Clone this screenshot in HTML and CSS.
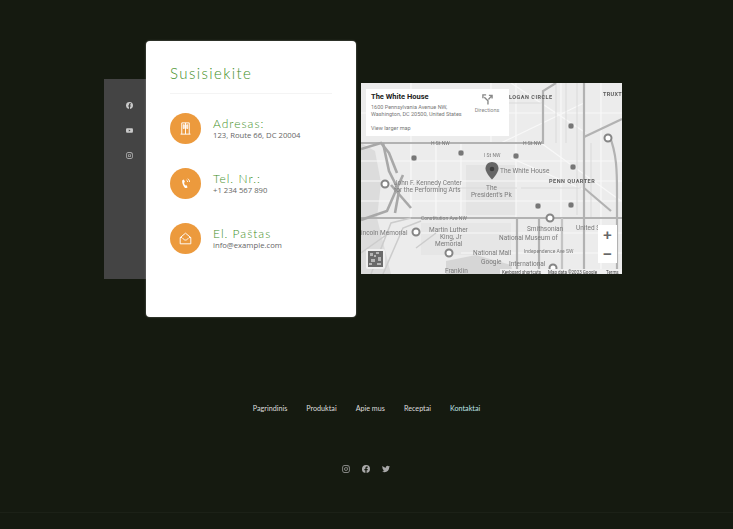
FILE: index.html
```html
<!DOCTYPE html>
<html lang="lt">
<head>
    <meta charset="UTF-8">
    <meta name="viewport" content="width=device-width, initial-scale=1.0">
    <title>Susisiekite</title>
    <link rel="stylesheet" href="styles.css">
</head>
<body>
    <svg class="icon-defs" width="0" height="0" aria-hidden="true">
        <symbol id="i-facebook" viewBox="0 0 24 24"><path d="M24 12a12 12 0 1 0-13.9 11.9v-8.400H7.100V12h3V9.400c0-3 1.800-4.700 4.500-4.700 1.300 0 2.700.2 2.700.2v3h-1.500c-1.500 0-2 .9-2 1.900V12h3.400l-.5 3.500h-2.900v8.400A12 12 0 0 0 24 12z"/></symbol>
        <symbol id="i-youtube" viewBox="0 0 24 24"><path d="M23.500 6.500a3 3 0 0 0-2.100-2.100C19.500 3.900 12 3.900 12 3.900s-7.500 0-9.400.5A3 3 0 0 0 .5 6.500 31 31 0 0 0 0 12a31 31 0 0 0 .5 5.500 3 3 0 0 0 2.100 2.100c1.900.5 9.400.5 9.400.5s7.500 0 9.400-.5a3 3 0 0 0 2.100-2.100A31 31 0 0 0 24 12a31 31 0 0 0-.5-5.500zM9.600 15.600V8.400l6.200 3.600z"/></symbol>
        <symbol id="i-instagram" viewBox="0 0 24 24"><path d="M7 1h10a6 6 0 0 1 6 6v10a6 6 0 0 1-6 6H7a6 6 0 0 1-6-6V7a6 6 0 0 1 6-6zm0 2.200A3.800 3.800 0 0 0 3.200 7v10A3.800 3.800 0 0 0 7 20.800h10a3.800 3.800 0 0 0 3.800-3.800V7A3.800 3.800 0 0 0 17 3.200zM12 6.500a5.500 5.500 0 1 1 0 11 5.500 5.500 0 0 1 0-11zm0 2.200a3.300 3.300 0 1 0 0 6.600 3.300 3.300 0 0 0 0-6.600zM17.800 4.800a1.400 1.400 0 1 1 0 2.800 1.400 1.400 0 0 1 0-2.800z" fill-rule="evenodd"/></symbol>
        <symbol id="i-twitter" viewBox="0 0 24 24"><path d="M24 4.600a10 10 0 0 1-2.800.8 5 5 0 0 0 2.200-2.700 10 10 0 0 1-3.100 1.200 4.900 4.900 0 0 0-8.400 4.500A14 14 0 0 1 1.700 3.200a4.900 4.900 0 0 0 1.500 6.600 4.900 4.900 0 0 1-2.200-.6 4.900 4.900 0 0 0 3.900 4.900 4.900 4.900 0 0 1-2.200.1 4.900 4.900 0 0 0 4.600 3.400A9.900 9.900 0 0 1 0 19.600a14 14 0 0 0 7.500 2.200c9.100 0 14.300-7.700 14-14.600A10 10 0 0 0 24 4.600z"/></symbol>
    </svg>

    <section class="contact">
        <aside class="side-social">
            <a href="#"><svg class="side-icon"><use href="#i-facebook"/></svg></a>
            <a href="#"><svg class="side-icon"><use href="#i-youtube"/></svg></a>
            <a href="#"><svg class="side-icon"><use href="#i-instagram"/></svg></a>
        </aside>

        <div class="card">
            <h1>Susisiekite</h1>

            <div class="info-row">
                <span class="info-circle">
                    <svg viewBox="0 0 24 24" class="line-icon">
                        <path d="M6 21V3h12v18M12 3v18M8.500 6h1.500v6H8.500zM14 6h1.500v6H14zM4 21h16"/>
                    </svg>
                </span>
                <div class="info-text">
                    <h3>Adresas:</h3>
                    <p>123, Route 66, DC 20004</p>
                </div>
            </div>

            <div class="info-row">
                <span class="info-circle">
                    <svg viewBox="0 0 24 24" class="fill-icon">
                        <path d="M7.500 6.500l2-.8 1.600 3.700-1.500 1.200c.3 1.800 1 3.300 2 4.500l1.700-.6 2.100 3.300-1.800 1.300c-1.100.6-2.300.2-3.100-.8-2.300-2.700-3.700-6.300-3.900-9.800 0-.9.200-1.700.9-2z"/>
                        <path d="M13.500 6.500c1.300.6 2 1.700 2 3M15.500 4.500c2 1 3 2.800 3 5" fill="none" stroke="currentColor" stroke-width="1.500"/>
                    </svg>
                </span>
                <div class="info-text">
                    <h3>Tel. Nr.:</h3>
                    <p>+1 234 567 890</p>
                </div>
            </div>

            <div class="info-row">
                <span class="info-circle">
                    <svg viewBox="0 0 24 24" class="line-icon">
                        <path d="M3.500 10.500L12 3.500l8.500 7V20.500h-17zM3.500 10.500h3M20.500 10.500h-3M7.500 11.500c1.200 2 2.800 3 4.500 3s3.300-1 4.500-3"/>
                    </svg>
                </span>
                <div class="info-text">
                    <h3>El. Paštas</h3>
                    <p>info@example.com</p>
                </div>
            </div>
        </div>

        <div class="map">
            <svg viewBox="0 0 261 191" width="261" height="191" class="map-art">
                <rect width="261" height="191" fill="#ececec"/>
                <!-- vanduo ir parkai -->
                <path d="M0 60L14 68 20 100 16 135 30 191H0z" fill="#dcdcdc"/>
                <path d="M85 178L115 172 150 182 152 191H85z" fill="#d6d6d6"/>
                <rect x="105" y="82" width="50" height="50" fill="#e4e4e4"/>
                <rect x="60" y="140" width="90" height="32" fill="#e6e6e6"/>
                <!-- smulkios gatves -->
                <g stroke="#f8f8f8" stroke-width="1.200" fill="none">
                    <path d="M0 30H261M0 78H261M0 98H261M0 118H261M60 150H261M100 170H261"/>
                    <path d="M50 0V135M75 60V135M100 60V135M130 0V60M155 0V135M200 0V135M240 0V191"/>
                    <path d="M150 0L225 50M140 60L223 20M180 60L260 118M150 75L230 110"/>
                </g>
                <g stroke="#dadada" stroke-width="1" fill="none">
                    <path d="M148 20H182M195 0V60M205 0V60M216 0V132M60 45H148M60 105H156M160 105H220M230 60V135"/>
                </g>
                <!-- pagrindiniai keliai -->
                <g stroke="#b2b2b2" stroke-width="2.200" fill="none">
                    <path d="M0 60H182V8L195 0"/>
                    <path d="M223 0V191"/>
                    <path d="M223 54L261 36"/>
                    <path d="M248 52C256 70 256 90 256 110V191"/>
                    <path d="M0 135H261"/>
                    <path d="M156 135V191M178 135V191"/>
                    <path d="M201 135V191" stroke="#c4c4c4"/>
                    <path d="M223 105L250 128"/>
                </g>
                <g stroke="#a8a8a8" stroke-width="2.600" fill="none">
                    <path d="M0 66L20 60 28 70 36 90"/>
                    <path d="M0 137L26 128 36 105 42 92"/>
                    <path d="M22 60L28 88 38 108 34 130"/>
                    <path d="M30 102L50 125"/>
                </g>
                <g stroke="#cccccc" stroke-width="1.500" fill="none">
                    <path d="M10 191L30 140 50 135M22 191L42 145 60 138M0 170L28 150M55 165L75 150"/>
                </g>
                <!-- metro zenklai -->
                <g fill="#777777" stroke="#f2f2f2" stroke-width="0.800">
                    <rect x="50" y="72" width="6" height="6" rx="2"/><rect x="97" y="67" width="6" height="6" rx="2"/>
                    <rect x="152" y="70" width="6" height="6" rx="2"/><rect x="207" y="40" width="6" height="6" rx="2"/>
                    <rect x="209" y="81" width="6" height="6" rx="2"/><rect x="174" y="120" width="6" height="6" rx="2"/>
                    <rect x="207" y="119" width="6" height="6" rx="2"/>
                </g>
                <g fill="#ffffff" stroke="#858585" stroke-width="2">
                    <circle cx="189" cy="135" r="3.500"/><circle cx="24" cy="101" r="3.500"/><circle cx="55" cy="149" r="3.500"/>
                    <circle cx="88" cy="170" r="3.500"/><circle cx="192" cy="185" r="3.500"/><circle cx="247" cy="55" r="3.500"/>
                </g>
                <!-- uzrasai -->
                <g class="map-label">
                    <text x="148" y="16" class="map-bold">LOGAN CIRCLE</text>
                    <text x="242" y="13" class="map-bold map-tight">TRUXT</text>
                    <text x="70" y="62" class="map-road">H St NW</text>
                    <text x="162" y="62" class="map-road">H St NW</text>
                    <text x="123" y="74" class="map-road">I St NW</text>
                    <text x="188" y="100" class="map-bold">PENN QUARTER</text>
                    <text x="139" y="90" class="map-place">The White House</text>
                    <text x="33" y="102" class="map-place">John F. Kennedy Center</text>
                    <text x="33" y="109" class="map-place">for the Performing Arts</text>
                    <text x="125" y="107" class="map-place">The</text>
                    <text x="110" y="114" class="map-place">President's Pk</text>
                    <text x="60" y="137" class="map-road">Constitution Ave NW</text>
                    <text x="68" y="149" class="map-place">Martin Luther</text>
                    <text x="79" y="156" class="map-place">King, Jr</text>
                    <text x="74" y="163" class="map-place">Memorial</text>
                    <text x="0" y="152" class="map-place">incoln Memorial</text>
                    <text x="166" y="148" class="map-place">Smithsonian</text>
                    <text x="138" y="156.500" class="map-place">National Museum of</text>
                    <text x="215" y="147" class="map-place">United S</text>
                    <text x="112" y="172" class="map-place">National Mall</text>
                    <text x="163" y="170" class="map-road">Independence Ave SW</text>
                    <text x="120" y="181" class="map-place">Google</text>
                    <text x="148" y="183" class="map-place">International</text>
                    <text x="84" y="190" class="map-place">Franklin</text>
                </g>
                <!-- vieta -->
                <path d="M131 79c-3.700 0-6.500 2.800-6.500 6.500 0 4.500 6.500 11 6.500 11s6.500-6.500 6.500-11c0-3.700-2.800-6.500-6.500-6.500z" fill="#666666"/>
                <circle cx="131" cy="86" r="2.300" fill="#3c3c3c"/>
                <!-- qr -->
                <rect x="5" y="166" width="19" height="20" rx="2" fill="#f0f0f0"/>
                <rect x="7" y="168" width="15" height="16" fill="#6a6a6a"/>
                <path d="M9 170h3v3H9zM15 169h3v2h-3zM10 176h4v3h-4zM17 174h3v4h-3zM13 172h2v2h-2zM8 180h3v2H8zM16 180h4v2h-4z" fill="#b5b5b5"/>
                <!-- attribution -->
                <rect x="139" y="186" width="122" height="5" fill="#f0f0f0"/>
                <text x="141" y="190.500" class="map-attr">Keyboard shortcuts</text>
                <text x="187" y="190.500" class="map-attr">Map data ©2023 Google</text>
                <text x="245" y="190.500" class="map-attr">Terms</text>
            </svg>

            <div class="map-info">
                <div class="map-info-main">
                    <strong>The White House</strong>
                    <p>1600 Pennsylvania Avenue NW,<br>Washington, DC 20500, United States</p>
                    <a href="#">View larger map</a>
                </div>
                <div class="map-directions">
                    <svg viewBox="0 0 24 24" class="dir-icon"><path d="M13 23v-8L5 7M2 9V2h7M14 12l7-8M15 3h7v7" fill="none" stroke="currentColor" stroke-width="3"/></svg>
                    <span>Directions</span>
                </div>
            </div>

            <div class="map-zoom">
                <span>+</span>
                <span>−</span>
            </div>
        </div>
    </section>

    <footer class="site-footer">
        <nav class="foot-nav">
            <a href="#">Pagrindinis</a>
            <a href="#">Produktai</a>
            <a href="#">Apie mus</a>
            <a href="#">Receptai</a>
            <a href="#" class="active">Kontaktai</a>
        </nav>
        <div class="foot-social">
            <a href="#"><svg class="foot-icon"><use href="#i-instagram"/></svg></a>
            <a href="#"><svg class="foot-icon"><use href="#i-facebook"/></svg></a>
            <a href="#"><svg class="foot-icon"><use href="#i-twitter"/></svg></a>
        </div>
        <div class="foot-line"></div>
    </footer>
</body>
</html>
```

FILE: styles.css
```css
* {
    box-sizing: border-box;
}

html, body {
    height: 100%;
}

body {
    margin: 0;
    background-color: #151a10;
    font-family: "Open Sans", "Liberation Sans", sans-serif;
    overflow: hidden;
}

a {
    text-decoration: none;
}

.icon-defs {
    display: block;
    height: 0;
}

.contact {
    display: flex;
    align-items: flex-start;
    padding: 41px 0 0 104px;
}

.side-social {
    width: 42px;
    height: 200px;
    margin-top: 38px;
    padding: 23px 0 0 8px;
    background-color: #444444;
    display: flex;
    flex-direction: column;
    align-items: center;
    gap: 19px;
    color: #c9c9c9;
}

.side-social a {
    display: block;
    height: 6px;
    color: inherit;
}

.side-icon {
    display: block;
    width: 7px;
    height: 7px;
    fill: currentColor;
}

.card {
    width: 210px;
    height: 276px;
    padding: 23px 24px 0;
    background-color: #ffffff;
    border-radius: 4px;
    box-shadow: 0 0 2px rgba(255, 255, 255, 0.4);
}

h1 {
    margin: 0 0 19px;
    padding-bottom: 11px;
    border-bottom: 1px solid #f4f4f4;
    font-family: Lato, "Liberation Sans", sans-serif;
    font-size: 15px;
    line-height: 18px;
    font-weight: 300;
    letter-spacing: 1.400px;
    color: #3f8f1f;
}

.info-row {
    display: flex;
    align-items: center;
    gap: 12px;
    height: 31px;
    margin-bottom: 24px;
}

.info-circle {
    flex: none;
    width: 31px;
    height: 31px;
    border-radius: 50%;
    background-color: #ec9a3d;
    color: #ffffff;
    display: flex;
    align-items: center;
    justify-content: center;
}

.line-icon {
    width: 15px;
    height: 15px;
    fill: none;
    stroke: currentColor;
    stroke-width: 1.500;
}

.fill-icon {
    width: 15px;
    height: 15px;
    fill: currentColor;
}

.info-text h3 {
    margin: 0;
    font-family: Lato, "Liberation Sans", sans-serif;
    font-size: 12px;
    line-height: 13px;
    font-weight: 300;
    letter-spacing: 1px;
    color: #3f8f1f;
}

.info-text p {
    margin: 0;
    font-size: 7.700px;
    line-height: 11px;
    color: #666666;
}

.map {
    position: relative;
    width: 261px;
    height: 191px;
    margin: 42px 0 0 5px;
    overflow: hidden;
}

.map-art {
    display: block;
    filter: blur(0.3px);
}

.map-label text {
    font-family: Roboto, "Liberation Sans", sans-serif;
    fill: #7a7a7a;
}

.map-place {
    font-size: 6.500px;
}

.map-road {
    font-size: 5px;
}

.map-label .map-bold {
    font-size: 5.500px;
    font-weight: 700;
    letter-spacing: 0.500px;
    fill: #5c5c5c;
}

.map-label .map-tight {
    letter-spacing: 0.300px;
}

.map-attr {
    font-family: Roboto, "Liberation Sans", sans-serif;
    font-size: 4.500px;
    fill: #444444;
}

.map-info {
    position: absolute;
    left: 5px;
    top: 6px;
    width: 143px;
    height: 47px;
    padding: 3px 5px;
    background-color: #ffffff;
    display: flex;
    justify-content: space-between;
    font-family: Roboto, "Liberation Sans", sans-serif;
}

.map-info-main strong {
    display: block;
    font-size: 7.500px;
    line-height: 10px;
    color: #222222;
}

.map-info-main p {
    margin: 2px 0 7px;
    font-size: 5.500px;
    line-height: 7px;
    color: #777777;
}

.map-info-main a {
    display: block;
    font-size: 5.500px;
    line-height: 7px;
    color: #777777;
}

.map-directions {
    display: flex;
    flex-direction: column;
    align-items: center;
    width: 28px;
    padding-top: 2px;
    margin-right: 3px;
    font-size: 5.500px;
    color: #888888;
}

.dir-icon {
    width: 11px;
    height: 11px;
    margin-bottom: 2px;
}

.map-zoom {
    position: absolute;
    left: 237px;
    top: 142px;
    width: 19px;
    height: 38px;
    background-color: #ffffff;
    display: flex;
    flex-direction: column;
    font-family: "Liberation Sans", sans-serif;
    font-size: 15px;
    font-weight: 700;
    color: #666666;
}

.map-zoom span {
    flex: 1;
    display: flex;
    align-items: center;
    justify-content: center;
}

.site-footer {
    margin-top: 87px;
}

.foot-nav {
    display: flex;
    justify-content: center;
    gap: 19px;
    font-family: Lato, "Liberation Sans", sans-serif;
    font-size: 7.200px;
    line-height: 9px;
}

.foot-nav a {
    color: #dddddd;
}

.foot-nav a.active {
    color: #bfe3e8;
}

.foot-social {
    display: flex;
    justify-content: center;
    gap: 12px;
    margin-top: 52px;
    padding-right: 2px;
    color: #a9a9a9;
}

.foot-social a {
    display: block;
    height: 8px;
    color: inherit;
}

.foot-icon {
    display: block;
    width: 8px;
    height: 8px;
    fill: currentColor;
}

.foot-line {
    height: 1px;
    margin-top: 39px;
    background-color: #1c2117;
}
```
